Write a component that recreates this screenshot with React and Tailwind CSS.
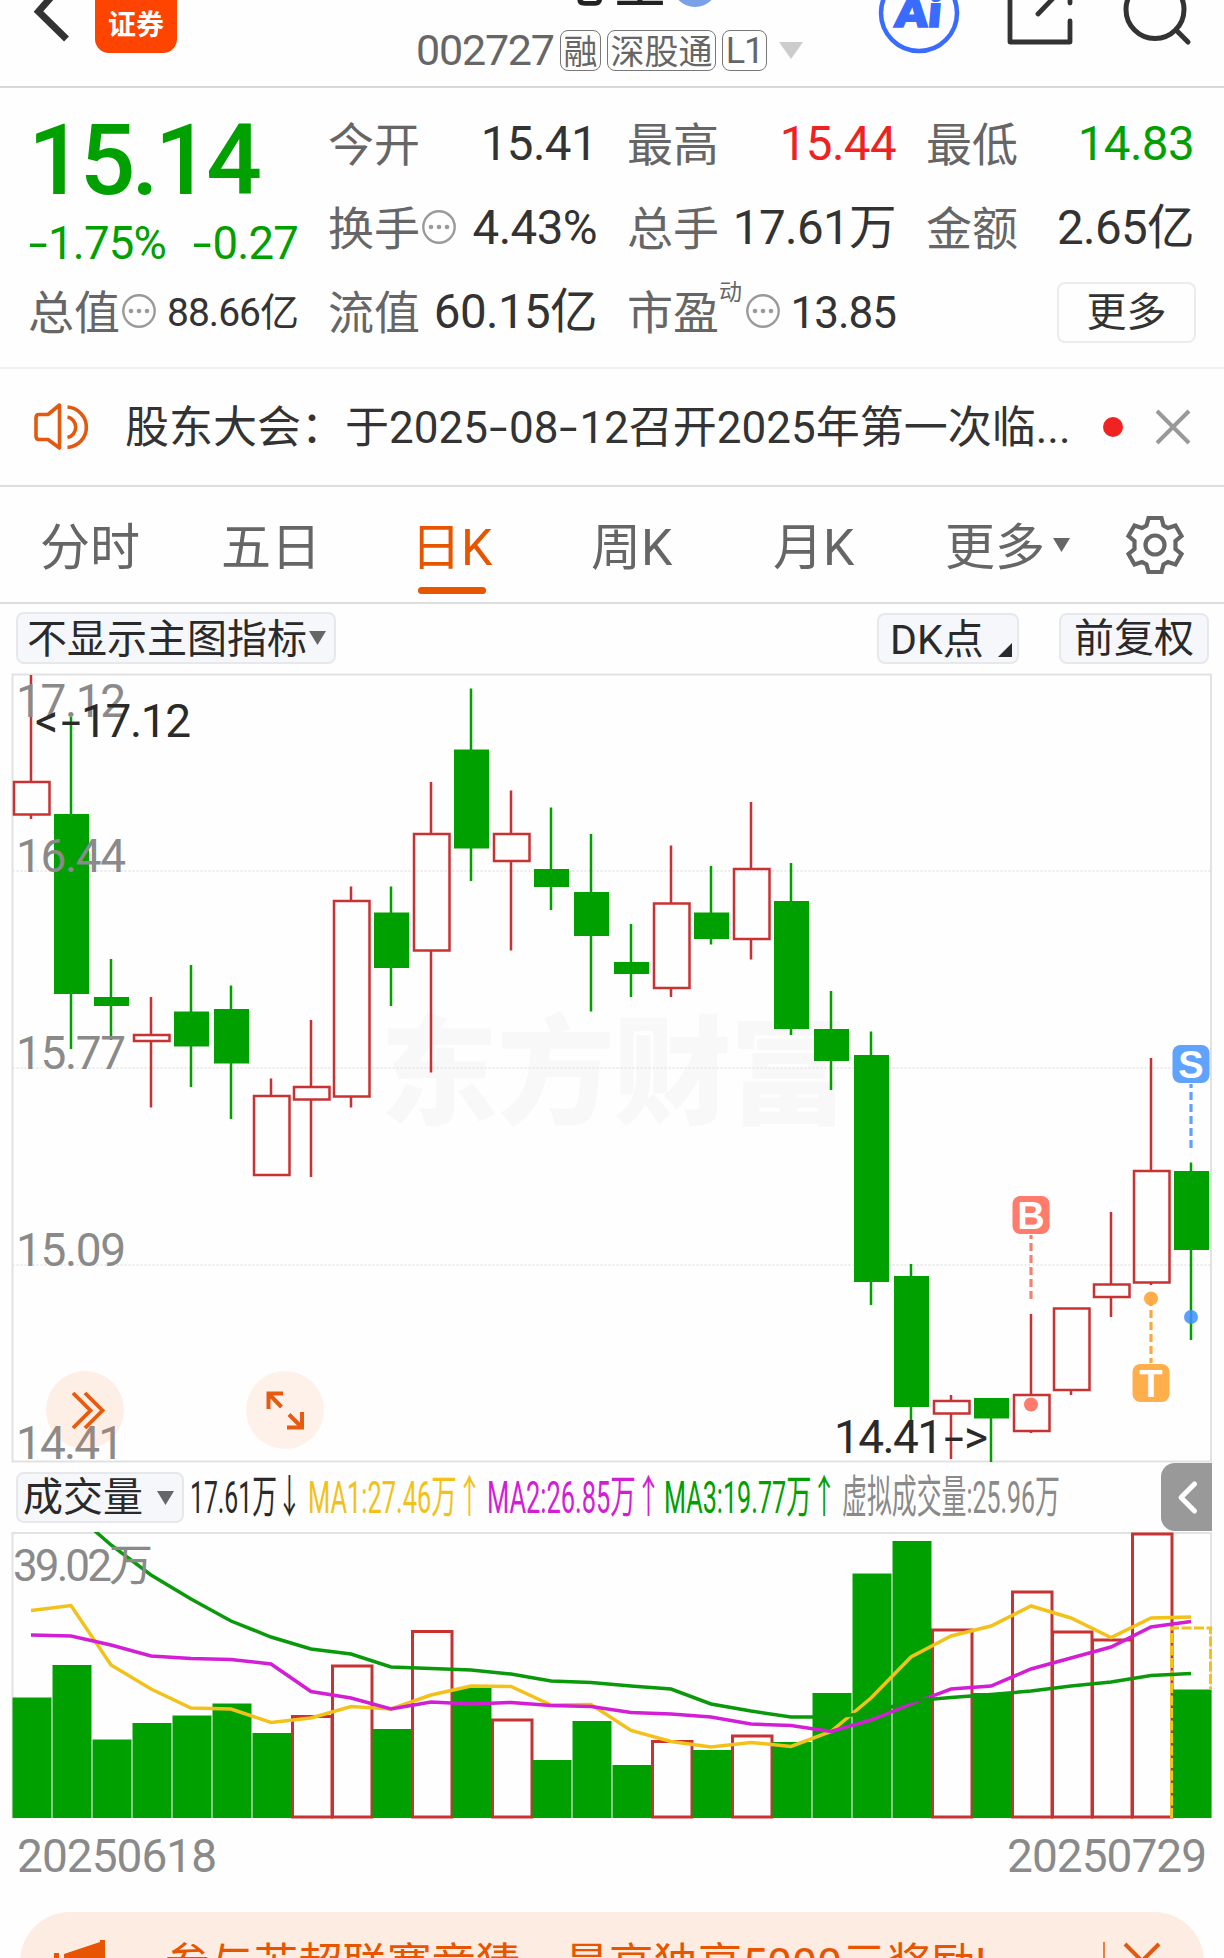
import React, { useState } from 'react';
import clsx from 'clsx';

const RED = '#c83232';
const GREEN = '#00a000';
const YELLOW = '#f2c21a';
const PURPLE = '#d21fd6';

// [up, high, bodyTop, bodyBottom, low]
const candles = [
  [1, 675, 782, 814.5, 819],
  [0, 717, 814, 994, 1049],
  [0, 959, 997, 1006, 1040],
  [1, 997, 1035, 1041, 1107.5],
  [0, 965, 1011.5, 1046.5, 1087],
  [0, 985.5, 1009, 1063.5, 1119],
  [1, 1078.5, 1096, 1175, 1175],
  [1, 1020, 1087, 1099.5, 1177],
  [1, 886.5, 901, 1096.5, 1107.5],
  [0, 886.5, 912.5, 968, 1006],
  [1, 782, 834, 950.5, 1072.5],
  [0, 688.5, 749.5, 848.5, 881],
  [1, 790.5, 834, 861, 950.5],
  [0, 807.5, 869, 887, 910],
  [0, 834, 892, 936, 1011.5],
  [0, 924, 962, 974, 997],
  [1, 845.5, 903.5, 988, 997],
  [0, 866, 912.5, 939, 944.5],
  [1, 802, 869, 939, 959.5],
  [0, 863, 901, 1029, 1035],
  [0, 991, 1029, 1061, 1090],
  [0, 1031.5, 1055, 1282, 1305],
  [0, 1264, 1276, 1407, 1453],
  [1, 1395, 1401, 1413.5, 1459],
  [0, 1398, 1398, 1418.5, 1462],
  [1, 1314, 1395, 1431, 1433],
  [1, 1308, 1308.5, 1390, 1395],
  [1, 1212, 1284.5, 1297, 1317],
  [1, 1058, 1171, 1282.5, 1285],
  [0, 1162.5, 1171, 1250, 1340]
];

const volumeTops = [
  1697.5, 1665, 1739.5, 1723, 1715.5, 1703.5, 1733, 1716.5, 1666, 1729, 1631.5, 1688, 1720, 1760, 1721,
  1765, 1741.5, 1750, 1736, 1742, 1693, 1573.5, 1541, 1630, 1693, 1592, 1632, 1640, 1534, 1689.5
];
const volumeUp = [7, 8, 10, 12, 16, 18, 23, 25, 26, 27, 28];

const ma1 = [
  1610.5, 1605.5, 1665, 1689, 1708, 1709, 1722.5, 1718, 1706.5, 1709, 1695, 1686, 1686.5, 1705, 1704.5,
  1730.5, 1741.5, 1747, 1742.5, 1746.5, 1731.5, 1698, 1657, 1636, 1626, 1606, 1618, 1637.5, 1618, 1617
];
const ma2 = [
  1635, 1636, 1645, 1656, 1658.5, 1659.5, 1664, 1691.5, 1698, 1709, 1702, 1704, 1702.5, 1705.5, 1706.5,
  1712.5, 1714, 1717, 1724, 1725.5, 1731.5, 1720, 1704, 1689, 1686, 1669, 1658, 1647, 1627, 1621.5
];
const ma3 = [
  1485, 1510, 1545, 1575, 1599, 1621, 1637, 1649, 1654, 1667, 1668.5, 1670, 1674, 1681, 1682.5,
  1686, 1689, 1704, 1711, 1717, 1717, 1713, 1701, 1697.5, 1694.5, 1691, 1686, 1682, 1675.5, 1673.5
];

const tabs = [
  { name: '分时', width: 'w-[181px]' },
  { name: '五日', width: 'w-[190px]' },
  { name: '日K', width: 'w-[180px]' },
  { name: '周K', width: 'w-[182px]' },
  { name: '月K', width: 'w-[172px]' }
];

const centerX = (i) => 31 + i * 40;
const toPoints = (values) => values.map((y, i) => `${centerX(i)},${y}`).join(' ');

function Dots() {
  return (
    <svg className="ml-[2px] h-[34px] w-[34px] shrink-0 translate-y-[2px]" viewBox="0 0 34 34">
      <circle cx="17" cy="17" r="15.7" fill="none" stroke="#9a9a9a" strokeWidth="2.4" />
      <circle cx="9" cy="17" r="2.3" fill="#9a9a9a" />
      <circle cx="17" cy="17" r="2.3" fill="#9a9a9a" />
      <circle cx="25" cy="17" r="2.3" fill="#9a9a9a" />
    </svg>
  );
}

function Hyphen() {
  return <span className="inline-block w-[21px] scale-x-[1.5] text-center">-</span>;
}

function Triangle({ className }) {
  return (
    <svg className={className} viewBox="0 0 10 8" preserveAspectRatio="none">
      <path d="M0 0H10L5 8Z" fill="currentColor" />
    </svg>
  );
}

function Stat({ label, value, color = 'text-[#333]', size = 'text-[47.5px] tracking-[-0.6px]', dots, sup }) {
  return (
    <div className="flex items-center justify-between whitespace-nowrap">
      <div className="flex items-center text-[46px] text-[#666]">
        <span className="translate-y-[4px]">{label}</span>
        {sup && <span className="-mt-[34px] w-[25px] text-[23px]">{sup}</span>}
        {dots && <Dots />}
      </div>
      <span className={clsx('translate-y-[4px]', size, color)}>{value}</span>
    </div>
  );
}

function Header() {
  return (
    <header className="flex h-[88px] shrink-0 overflow-hidden border-b-2 border-[#d8d8d8]">
      <svg className="ml-[30px] h-[46px] w-[44px]" viewBox="30 0 44 46" fill="none" stroke="#333" strokeWidth="7">
        <path d="M67 -21L38.5 11.5L66.5 39" />
      </svg>
      <div className="ml-[21px] flex h-[53px] w-[82px] items-end justify-center rounded-b-[14px] bg-[#ff4400] pb-[10px] text-[28px] leading-[34px] font-bold text-white">
        证券
      </div>
      <div className="ml-[235px] flex w-[400px] flex-col">
        <div className="flex h-[20px] items-end pl-[98px] text-[52px] leading-[52px] font-medium text-[#222]">
          <span className="-translate-y-[9px]">一心堂</span>
          <span className="ml-[6px] h-[46px] w-[46px] shrink-0 -translate-y-[13px] rounded-full bg-[#7aa0e8]" />
        </div>
        <div className="mt-[10px] flex h-[41px] items-center text-[34px] text-[#666]">
          <span className="ml-[4px] w-[144px] text-[43px] leading-[41px] tracking-[-1.2px]">002727</span>
          <span className="flex h-[41px] w-[41px] items-center justify-center rounded-lg border-[1.5px] border-[#777] pt-[2px] leading-none">融</span>
          <span className="ml-[6px] flex h-[41px] w-[109px] items-center justify-center rounded-lg border-[1.5px] border-[#777] pt-[2px] leading-none">深股通</span>
          <span className="ml-[6px] flex h-[41px] w-[45px] items-center justify-center rounded-lg border-[1.5px] border-[#777] text-[36px] leading-none tracking-[-1px]">L1</span>
          <Triangle className="ml-[12px] h-[17px] w-[24px] text-[#ccc]" />
        </div>
      </div>
      <svg className="ml-[63px] h-[60px] w-[330px]" viewBox="875 0 330 60" fill="none">
        <circle cx="919" cy="13" r="38" stroke="#3a6bff" strokeWidth="4.5" />
        <text x="894" y="27" transform="skewX(-5) translate(2 0)" fontSize="44" fontWeight="900" fill="#3a6bff" stroke="#3a6bff" strokeWidth="1.500" textLength="47" lengthAdjust="spacingAndGlyphs">Ai</text>
        <path d="M1010 -10V42H1070V21M1070 3V-10M1038 14L1062 -11" stroke="#333" strokeWidth="4.8" strokeLinecap="round" strokeLinejoin="round" />
        <circle cx="1155" cy="9.5" r="29" stroke="#333" strokeWidth="5" />
        <path d="M1176 30L1188 42" stroke="#333" strokeWidth="5" strokeLinecap="round" />
      </svg>
    </header>
  );
}

function Quote() {
  return (
    <section className="grid h-[281px] shrink-0 grid-cols-[270px_269px_269px_268px] grid-rows-[84px_84px_84px] gap-x-[30px] border-b-2 border-[#f0f0f0] pt-[11px] pl-[28px] leading-none">
      <div className="row-span-2 flex flex-col text-[#00a000]">
        <span className="mt-[13px] text-[98px] font-medium tracking-[-4px]">15.14</span>
        <span className="mt-[11px] flex justify-between text-[45.5px] tracking-[-0.8px] whitespace-nowrap">
          <span className="-ml-[1px]"><Hyphen />1.75%</span>
          <span><Hyphen />0.27</span>
        </span>
      </div>
      <Stat label="今开" value="15.41" />
      <Stat label="最高" value="15.44" color="text-[#ee2222]" />
      <Stat label="最低" value="14.83" color="text-[#00a000]" />
      <Stat label="换手" value="4.43%" dots />
      <Stat label="总手" value="17.61万" />
      <Stat label="金额" value="2.65亿" />
      <Stat label="总值" value="88.66亿" dots size="text-[39px] tracking-[-1px]" />
      <Stat label="流值" value="60.15亿" />
      <Stat label="市盈" value="13.85" dots sup="动" size="text-[44px] tracking-[-1px]" />
      <button className="mt-[15px] ml-[131px] h-[61px] w-[139px] rounded-lg border-2 border-[#ececec] text-[40px] leading-[53px] text-[#333]">
        更多
      </button>
    </section>
  );
}

function Notice({ onClose }) {
  return (
    <section className="flex h-[118px] shrink-0 items-center border-b-2 border-[#dedede] text-[44px] whitespace-nowrap text-[#333]">
      <svg className="ml-[32px] h-[60px] w-[60px]" viewBox="32 397 60 60" fill="none" stroke="#e2590f" strokeWidth="3.6">
        <path d="M59.500 405L48 414.500H39Q36 414.500 36 418V436Q36 439.500 39 439.500H48L59.500 448Z" strokeLinejoin="round" />
        <path d="M67.500 417A10.500 10.500 0 0 1 67.500 437.500M67.500 407A20.300 20.300 0 0 1 67.500 447.500" />
      </svg>
      <p className="ml-[33px] w-[945px] translate-y-[1px]">
        股东大会：于2025<Hyphen />08<Hyphen />12召开2025年第一次临...
      </p>
      <span className="ml-[33px] h-[20px] w-[20px] rounded-full bg-[#f02222]" />
      <svg onClick={onClose} className="ml-[32px] h-[36px] w-[36px]" viewBox="0 0 36 36" stroke="#999" strokeWidth="4">
        <path d="M2 2L34 34M34 2L2 34" />
      </svg>
    </section>
  );
}

function Tabs({ active, onChange }) {
  return (
    <nav className="flex h-[117px] shrink-0 border-b-2 border-[#dedede] pl-[40px] text-[50px] leading-[122px] text-[#666]">
      {tabs.map((tab) => (
        <button
          key={tab.name}
          onClick={() => onChange(tab.name)}
          className={clsx('flex flex-col items-start whitespace-nowrap', tab.width, active === tab.name && 'text-[#e85500]')}
        >
          <span className="h-[100px]">{tab.name}</span>
          {active === tab.name && <span className="ml-[7px] h-[7px] w-[68px] rounded-full bg-[#e85500]" />}
        </button>
      ))}
      <button className="flex">
        更多
        <Triangle className="mt-[51px] ml-[8px] h-[14px] w-[17px]" />
      </button>
      <svg className="mt-[28px] ml-[55px] h-[60px] w-[60px]" viewBox="-30 -30 60 60" fill="none" stroke="#666" strokeWidth="4.2">
        <path d="M-6.500 -27H6.500L8.500 -19.500L13 -17L20.500 -19.500L26.500 -9L20.500 -4V4L26.500 9L20.500 19.500L13 17L8.500 19.500L6.500 27H-6.500L-8.500 19.500L-13 17L-20.500 19.500L-26.500 9L-20.500 4V-4L-26.500 -9L-20.500 -19.500L-13 -17L-8.500 -19.500Z" />
        <circle r="9.500" />
      </svg>
    </nav>
  );
}

function Marker({ x, y, letter, color }) {
  return (
    <g>
      <rect x={x - 18.5} y={y} width="37" height="38" rx="8" fill={color} />
      <text x={x} y={y + 33} textAnchor="middle" fontFamily="Liberation Sans" fontWeight="700" fontSize="38" fill="#fff">
        {letter}
      </text>
    </g>
  );
}

function CandleChart() {
  return (
    <div className="relative h-[792px] shrink-0">
      <svg className="block" width="1224" height="792" viewBox="0 671 1224 792">
        <text x="380" y="1115" fontSize="118" fontWeight="900" fill="#f8f8f8" textLength="468">东方财富</text>
        <path d="M12.500 871H1211M12.500 1068H1211M12.500 1265H1211" stroke="#e4e4e4" strokeWidth="1.5" strokeDasharray="2 2" />
        <rect x="12.500" y="674.500" width="1198.500" height="787" fill="none" stroke="#e2e2e2" strokeWidth="2" />
        {candles.map(([up, high, top, bottom, low], i) => {
          const x = centerX(i);
          return up ? (
            <g key={i} stroke={RED} strokeWidth="2.5">
              <path d={`M${x} ${high}V${top}M${x} ${bottom}V${low}`} />
              <rect x={x - 17} y={top} width="35.5" height={bottom - top} fill="none" />
            </g>
          ) : (
            <g key={i} fill={GREEN}>
              <rect x={x - 1.25} y={high} width="2.5" height={low - high} />
              <rect x={x - 17} y={top} width="35" height={bottom - top} />
            </g>
          );
        })}
        <g fontSize="46" fill="#8a8a8a">
          <text x="16" y="717" textLength="110">17.12</text>
          <text x="16" y="871.500" textLength="110">16.44</text>
          <text x="16" y="1069" textLength="110">15.77</text>
          <text x="16" y="1266" textLength="110">15.09</text>
          <text x="16" y="1458.500" textLength="108">14.41</text>
        </g>
        <g fontSize="46" fill="#2a2a2a">
          <text x="35" y="737">&lt;</text>
          <text x="61" y="737" textLength="20" lengthAdjust="spacingAndGlyphs">-</text>
          <text x="81" y="737" textLength="110">17.12</text>
          <text x="834" y="1452.500" textLength="109">14.41</text>
          <text x="944" y="1452.500" textLength="20" lengthAdjust="spacingAndGlyphs">-</text>
          <text x="964" y="1452.500">&gt;</text>
        </g>
        <path d="M1191 1084V1149" stroke="#60a0ff" strokeWidth="3.200" strokeDasharray="8 4" strokeDashoffset="4" />
        <circle cx="1191" cy="1317" r="7" fill="#3f8fff" fillOpacity=".85" />
        <Marker x={1191} y={1045} letter="S" color="#60a3ff" />
        <path d="M1031 1235V1300" stroke="#f58072" strokeWidth="3.200" strokeDasharray="8 4" strokeDashoffset="4" />
        <circle cx="1031" cy="1404.500" r="7" fill="#ff7c6c" />
        <Marker x={1031} y={1196} letter="B" color="#ff7c6c" />
        <circle cx="1151" cy="1298.500" r="7" fill="#ffae4c" />
        <path d="M1151 1298V1363" stroke="#fba83f" strokeWidth="3.200" strokeDasharray="8 4" />
        <Marker x={1151} y={1364} letter="T" color="#ffae4c" />
      </svg>
      <button className="absolute top-[700px] left-[46px] h-[78px] w-[78px] rounded-full bg-[#f87838]/12">
        <svg viewBox="46 1371 78 78" fill="none" stroke="#e85a10" strokeWidth="3.8">
          <path d="M73 1393L90.500 1410.500L73 1428M85 1393L102.500 1410.500L85 1428" />
        </svg>
      </button>
      <button className="absolute top-[700px] left-[246px] h-[78px] w-[78px] rounded-full bg-[#fef1ea]">
        <svg viewBox="246 1371 78 78" fill="none" stroke="#e85a10" strokeWidth="4">
          <path d="M283 1393.500H268.500V1409M268.500 1393.500L281.500 1407M287 1427.500H302V1412M302 1427.500L289 1414.500" />
        </svg>
      </button>
    </div>
  );
}

function VolumeInfo() {
  return (
    <div className="flex h-[69px] shrink-0 text-[45px] leading-[70px] whitespace-nowrap">
      <button className="mt-[9px] ml-[16px] flex h-[51px] w-[168px] items-center rounded-lg border-2 border-[#e6e8ec] bg-[#f6f7fa] pl-[5px] text-[40px] leading-none text-[#2a2a2a]">
        <span>成交量</span>
        <Triangle className="ml-[14px] h-[14px] w-[17px] text-[#666]" />
      </button>
      <span className="ml-[6px] w-[118px] text-[#2a2a2a]"><span className="inline-block origin-left scale-x-[0.55]">17.61万↓</span></span>
      <span className="w-[179px] text-[#f2c21a]"><span className="inline-block origin-left scale-x-[0.565]">MA1:27.46万↑</span></span>
      <span className="w-[177px] text-[#d21fd6]"><span className="inline-block origin-left scale-x-[0.565]">MA2:26.85万↑</span></span>
      <span className="w-[178px] text-[#00a000]"><span className="inline-block origin-left scale-x-[0.56]">MA3:19.77万↑</span></span>
      <span className="w-[319px] text-[#8a8a8a]"><span className="inline-block origin-left scale-x-[0.553]">虚拟成交量:25.96万</span></span>
      <button className="h-[68px] w-[51px] rounded-l-[14px] bg-[#999]">
        <svg viewBox="0 0 51 68" fill="none" stroke="#fff" strokeWidth="5" strokeLinecap="round" strokeLinejoin="round">
          <path d="M33.500 21L20 34.500L33.500 48" />
        </svg>
      </button>
    </div>
  );
}

function VolumeChart() {
  return (
    <svg className="block shrink-0" width="1224" height="379" viewBox="0 1532 1224 379">
      <path d="M12.500 1818V1533H1211V1818" fill="none" stroke="#e2e2e2" strokeWidth="2" />
      {volumeTops.map((y, i) =>
        volumeUp.includes(i) ? (
          <rect key={i} x={12.5 + i * 40} y={y} width="39.5" height={1817 - y} fill="none" stroke={RED} strokeWidth="3" />
        ) : (
          <rect key={i} x={12.5 + i * 40} y={y} width="39" height={1818 - y} fill={GREEN} />
        )
      )}
      <path d="M1171.500 1818V1628H1210.500V1690" fill="none" stroke={YELLOW} strokeWidth="3" strokeDasharray="10 2.500" />
      <polyline points={toPoints(ma1)} fill="none" stroke={YELLOW} strokeWidth="3.500" />
      <polyline points={toPoints(ma2)} fill="none" stroke={PURPLE} strokeWidth="3.500" />
      <polyline points={toPoints(ma3)} fill="none" stroke="#0a990a" strokeWidth="3.500" />
      <g fill="#8a8a8a">
        <text x="13" y="1581" fontSize="44" textLength="140">39.02万</text>
        <text x="17" y="1872" fontSize="46" textLength="200">20250618</text>
        <text x="1007" y="1872" fontSize="46" textLength="200">20250729</text>
      </g>
    </svg>
  );
}

function Banner() {
  return (
    <div className="mx-[20px] mt-[1px] flex h-[110px] shrink-0 rounded-[50px] bg-[#fdece2] text-[44.5px] leading-[107px] whitespace-nowrap text-[#e85500]">
      <svg className="mt-[20px] ml-[30px] h-[60px] w-[60px]" viewBox="50 1932 60 60" fill="#e85500">
        <path d="M64 1954L100 1942V1940H105V1990H64ZM54 1953H59V1990H54Z" />
      </svg>
      <span className="ml-[55px] w-[938px] tracking-[-0.1px]">参与苏超联赛竞猜，最高独享5000元奖励!</span>
      <svg className="mt-[30px] h-[60px] w-[80px]" viewBox="1104 1942 80 60" fill="none" stroke="#e2590f" strokeWidth="4">
        <path d="M1105 1942V1990" strokeWidth="1.500" />
        <path d="M1126 1944L1160 1978M1160 1944L1126 1978" />
      </svg>
    </div>
  );
}

function App() {
  const [active, setActive] = useState('日K');
  const [showNotice, setShowNotice] = useState(true);

  return (
    <div className="flex h-[1958px] w-[1224px] flex-col overflow-hidden bg-[#fefefe] font-[Roboto,'Noto_Sans_CJK_SC',sans-serif]">
      <Header />
      <Quote />
      {showNotice && <Notice onClose={() => setShowNotice(false)} />}
      <Tabs active={active} onChange={setActive} />
      <div className="flex h-[67px] shrink-0 items-start pt-[8px] text-[40px] leading-[46px] whitespace-nowrap text-[#2a2a2a]">
        <button className="ml-[16px] flex h-[52px] w-[320px] items-center rounded-lg border-2 border-[#e6e8ec] bg-[#f6f7fa] pl-[9px]">
          <span className="translate-y-[2px]">不显示主图指标</span>
          <Triangle className="ml-[2px] h-[14px] w-[17px] text-[#666]" />
        </button>
        <button className="mt-[1px] ml-[541px] flex h-[51px] w-[142px] items-end rounded-lg border-2 border-[#e6e8ec] bg-[#f6f7fa] pl-[11px]">
          <span className="w-[108px] translate-y-[1px] text-left text-[41px]">DK点</span>
          <svg className="mb-[5px] h-[14px] w-[14px]" viewBox="0 0 14 14"><path d="M14 0V14H0Z" fill="#2a2a2a" /></svg>
        </button>
        <button className="mt-[1px] ml-[40px] h-[51px] w-[150px] rounded-lg border-2 border-[#e6e8ec] bg-[#f6f7fa] leading-[48px]">前复权</button>
      </div>
      <CandleChart />
      <VolumeInfo />
      <VolumeChart />
      <Banner />
    </div>
  );
}

export default App;
